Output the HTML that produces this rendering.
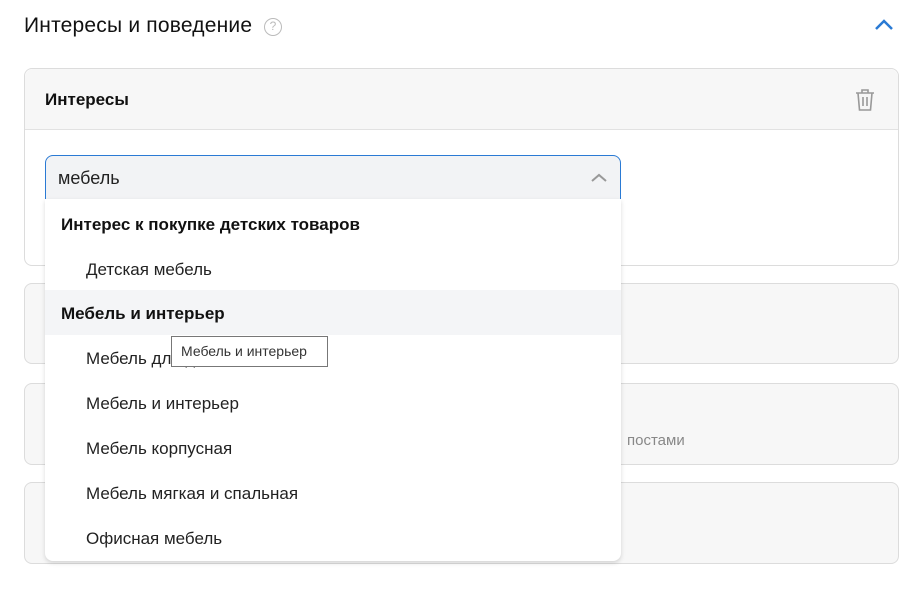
<!DOCTYPE html>
<html><head><meta charset="utf-8"><style>
*{box-sizing:border-box;margin:0;padding:0}
body{width:912px;height:591px;background:#fff;font-family:"Liberation Sans","Noto Sans CJK SC",sans-serif;color:#222;position:relative;overflow:hidden}
.abs{position:absolute}
.card{position:absolute;left:24px;width:875px;border:1px solid #dcdcdc;border-radius:8px;background:#f7f7f7}
.item{position:absolute;left:0;width:100%;height:45px;line-height:47px;font-size:17px;padding-left:41px;color:#222}
.grp{font-weight:bold;padding-left:16px;color:#111}
</style></head><body>
<div class="abs" style="left:24px;top:14px;font-size:21px;color:#111;letter-spacing:0.2px;font-weight:500">Интересы и поведение</div>
<div class="abs" style="left:264px;top:18px;width:18px;height:18px;border:1.5px solid #bbb;border-radius:50%;color:#bbb;font-size:12px;text-align:center;line-height:15px;">?</div>
<svg class="abs" style="left:874px;top:18px" width="20" height="14"><path d="M2 11 L10 3 L18 11" stroke="#2a7ad4" stroke-width="2.5" fill="none"/></svg>

<div class="card" style="top:68px;height:198px;background:#fff;">
 <div style="height:61px;background:#f7f7f7;border-bottom:1px solid #e2e2e2;border-radius:8px 8px 0 0;padding:21px 20px;font-size:17px;font-weight:bold;color:#111">Интересы</div>
 <svg class="abs" style="left:829px;top:19px" width="22" height="24" viewBox="0 0 22 24"><path d="M2 5h18M8 5V2h6v3M4 5l1.5 17h11L18 5M9 9v9M13 9v9" stroke="#999" stroke-width="1.6" fill="none"/></svg>
</div>
<div class="card" style="top:283px;height:81px"></div>
<div class="card" style="top:383px;height:82px"></div>
<div class="abs" style="left:627px;top:432px;font-size:15px;color:#888">постами</div>
<div class="card" style="top:482px;height:82px"></div>

<div class="abs" style="left:45px;top:155px;width:576px;height:45px;background:#f2f3f5;border:1px solid #2a7ad4;border-radius:8px 8px 0 0;padding:12px 12px;font-size:18px;color:#222">мебель</div>
<svg class="abs" style="left:590px;top:172px" width="18" height="12"><path d="M2 9 L9 3 L16 9" stroke="#999" stroke-width="2" fill="none"/></svg>

<div class="abs" style="left:45px;top:199px;width:576px;height:362px;background:#fff;border-radius:0 0 8px 8px;box-shadow:0 2px 5px rgba(0,0,0,.15);overflow:hidden">
 <div class="item grp" style="top:2px">Интерес к покупке детских товаров</div>
 <div class="item" style="top:47px">Детская мебель</div>
 <div class="item grp" style="top:91px;background:#f4f5f7">Мебель и интерьер</div>
 <div class="item" style="top:136px">Мебель для дачи</div>
 <div class="item" style="top:181px">Мебель и интерьер</div>
 <div class="item" style="top:226px">Мебель корпусная</div>
 <div class="item" style="top:271px">Мебель мягкая и спальная</div>
 <div class="item" style="top:316px">Офисная мебель</div>
</div>
<div class="abs" style="left:171px;top:336px;width:157px;height:31px;background:#fff;border:1px solid #777;font-size:14px;line-height:29px;padding-left:9px;color:#333">Мебель и интерьер</div>
</body></html>
